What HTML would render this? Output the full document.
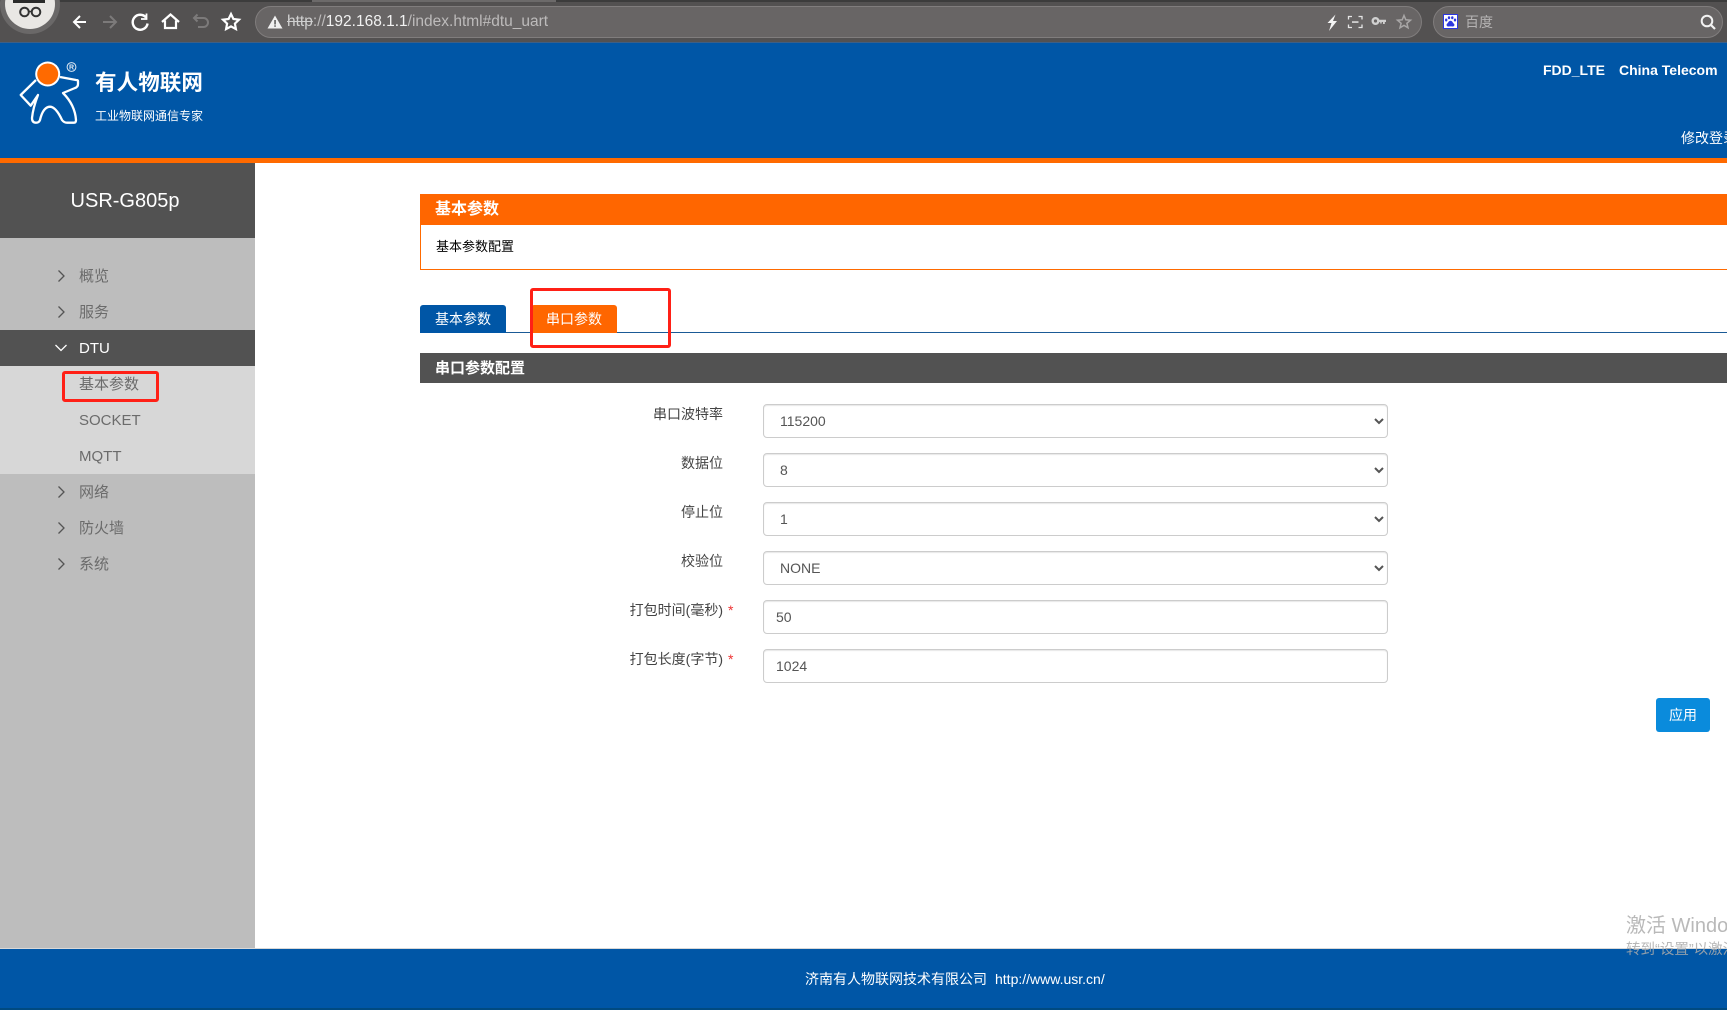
<!DOCTYPE html>
<html lang="zh">
<head>
<meta charset="utf-8">
<title>USR-G805p</title>
<style>
*{box-sizing:border-box}
html,body{margin:0;padding:0;width:1727px;height:1010px;overflow:hidden;background:#fff}
body{position:relative;font-family:"Liberation Sans","Noto Sans CJK SC",sans-serif;font-size:14px;color:#333}
.a{position:absolute}
.t{position:absolute;white-space:nowrap}
.nav{position:absolute;left:79px;font-size:15px;line-height:36px;height:36px;color:#6b6b6b;white-space:nowrap}
.chev{position:absolute;left:56px;width:10px;height:14px}
.lab{position:absolute;right:1004px;font-size:14px;line-height:20px;color:#444;white-space:nowrap;text-align:right}
.star{color:#e33;margin-left:5px;position:absolute;left:100%}
.fc{position:absolute;left:763px;width:625px;height:34px;border:1px solid #ccc;border-radius:4px;background:#fff;color:#555;font:14px "Liberation Sans","Noto Sans CJK SC",sans-serif;padding:0 12px;box-shadow:inset 0 1px 1px rgba(0,0,0,.1);outline:0}
.red{position:absolute;border:3px solid #ff2016;border-radius:3px}
</style>
</head>
<body>
<!-- browser chrome -->
<div class="a" style="left:0;top:0;width:1727px;height:43px;background:#535151"></div>
<div class="a" style="left:0;top:0;width:1727px;height:2px;background:#3c3c3c"></div>
<div class="a" style="left:312px;top:0;width:244px;height:2px;background:#6c6a6a"></div>
<div class="a" style="left:0;top:42px;width:1727px;height:1px;background:#3d5f86"></div>
<svg class="a" style="left:0;top:0" width="260" height="43" viewBox="0 0 260 43">
  <circle cx="30" cy="4" r="30" fill="#6a6868"/>
  <circle cx="30" cy="4" r="25" fill="#e9e7e4"/>
  <path d="M13 3H45V0H13z" fill="#2b2b2b"/>
  <circle cx="24.500" cy="12" r="4.300" fill="none" stroke="#333" stroke-width="2"/>
  <circle cx="36" cy="12" r="4.300" fill="none" stroke="#333" stroke-width="2"/>
  <path d="M28.800 11.500h3" stroke="#333" stroke-width="1.500"/>
  <g fill="none" stroke="#fff" stroke-width="2">
    <path d="M86 22H74M80 16l-6 6 6 6"/>
    <path d="M103 22h13M110 16l6 6-6 6" stroke="#7c7a7a"/>
    <path d="M146 17.500a7.500 7.500 0 1 0 1.600 6" stroke-width="2.400"/>
    <path d="M146.500 13.500v5.500h-5.500" stroke-width="1.800"/>
    <path d="M162 22l8.500-7.500 8.500 7.500M165 20.500V28h11v-7.500" stroke-width="2.200"/>
    <path d="M198 27h5.500a4.500 4.500 0 0 0 0-9H194M197.500 14.500l-3.500 3.500 3.500 3.500" stroke="#7c7a7a" stroke-width="2"/>
    <path d="M231 14l2.400 5 5.600.7-4.100 3.900 1 5.500-4.900-2.700-4.900 2.700 1-5.500-4.100-3.900 5.600-.7z" stroke-width="2.200"/>
  </g>
</svg>
<div class="a" style="left:255px;top:6px;width:1167px;height:32px;border:1px solid #807d7d;border-radius:16px;background:#686565"></div>
<div class="a" style="left:1433px;top:6px;width:290px;height:32px;border:1px solid #807d7d;border-radius:16px;background:#686565"></div>
<svg class="a" style="left:266px;top:13px" width="18" height="18" viewBox="0 0 18 18"><path d="M9 2.500L16.500 15.500H1.500z" fill="#f0f0f0"/><rect x="8.300" y="7" width="1.500" height="4.500" fill="#555"/><rect x="8.300" y="12.300" width="1.500" height="1.500" fill="#555"/></svg>
<div class="t" style="left:287px;top:12px;line-height:20px;font-size:15.500px;color:#bdbbbb"><span style="text-decoration:line-through;color:#cfcfcf">http</span>://<span style="color:#f2f2f2">192.168.1.1</span>/index.html#dtu_uart</div>
<svg class="a" style="left:1320px;top:10px" width="100" height="24" viewBox="0 0 100 24">
  <path d="M15.500 4.500L7.500 13h4l-2.500 8 8-10h-4z" fill="#f5f5f5"/>
  <path d="M28.500 9.500V6.500h3.500M38.500 6.500h3.500v3M42 14.500v3h-3.500M32 17.500h-3.500v-3" fill="none" stroke="#e5e5e5" stroke-width="1.300"/>
  <rect x="32" y="11.300" width="6.500" height="1.500" fill="#e5e5e5"/>
  <circle cx="55.500" cy="11" r="2.800" fill="none" stroke="#d0d0d0" stroke-width="2.400"/>
  <path d="M58.500 9.800H66v2.200h-1.200v2h-1.800v-2h-1.300v1.500h-1.500v-1.500h-2.200z" fill="#d0d0d0"/>
  <path d="M84 5.500l1.800 4.300 4.700.4-3.600 3.100 1.100 4.500-4-2.400-4 2.400 1.100-4.500-3.600-3.100 4.700-.4z" fill="none" stroke="#a8a6a6" stroke-width="1.500"/>
</svg>
<svg class="a" style="left:1443px;top:14px" width="15" height="15" viewBox="0 0 15 15">
  <rect x=".5" y=".5" width="14" height="14" fill="#fff" stroke="#2d38e0"/>
  <g fill="#2d38e0"><ellipse cx="3.200" cy="6" rx="1.200" ry="1.500"/><ellipse cx="6" cy="3.800" rx="1.200" ry="1.500"/><ellipse cx="9.300" cy="3.800" rx="1.200" ry="1.500"/><ellipse cx="12" cy="6" rx="1.200" ry="1.500"/><path d="M7.500 6.800c2 0 2 2 3.500 3 1 1.200.2 2.900-1.500 2.700-1.300-.2-2.700-.2-4 0-1.700.2-2.500-1.500-1.500-2.700 1.500-1 1.500-3 3.500-3z"/></g>
</svg>
<div class="t" style="left:1465px;top:11px;line-height:22px;font-size:14px;color:#b5b3b3">百度</div>
<svg class="a" style="left:1699px;top:13px" width="18" height="18" viewBox="0 0 18 18"><circle cx="8" cy="8" r="5.300" fill="none" stroke="#f2f2f2" stroke-width="2"/><path d="M12 12l4 4" stroke="#f2f2f2" stroke-width="2.200"/></svg>

<!-- header -->
<div class="a" style="left:0;top:43px;width:1727px;height:115px;background:#0056a6"></div>
<div class="a" style="left:0;top:158px;width:1727px;height:5px;background:#ff6a00"></div>
<svg class="a" style="left:0;top:43px" width="90" height="90" viewBox="0 43 90 90">
  <path d="M36 80L20.700 95 30.700 105.700 38 95Q33 108 32 118 32 122.700 36 122.700 39 122.700 40 120 43 107 50 106.700 56 107 62 120 64 122.700 67 122.700H74Q76 122.700 76 120 75 105 63 93L75 88Q78 87 78 84V81Q78 80 76 80L60 77" fill="none" stroke="#fff" stroke-width="2.300" stroke-linejoin="round"/>
  <circle cx="47.700" cy="74" r="12.500" fill="#fff"/>
  <circle cx="47.700" cy="74" r="10.500" fill="#ff6a00"/>
  <circle cx="71.500" cy="67" r="4.400" fill="none" stroke="#dfe9f3" stroke-width="1"/>
  <text x="71.500" y="69.700" font-size="7" font-weight="bold" fill="#dfe9f3" text-anchor="middle" font-family="Liberation Sans, sans-serif">R</text>
</svg>
<div class="t" style="left:95px;top:68px;font-size:21.500px;font-weight:bold;line-height:30px;color:#fff;letter-spacing:.1px">有人物联网</div>
<div class="t" style="left:95px;top:106px;font-size:12px;line-height:20px;color:#fff">工业物联网通信专家</div>
<div class="t" style="left:1543px;top:60px;font-size:14px;font-weight:bold;line-height:20px;color:#fff">FDD_LTE</div>
<div class="t" style="left:1619px;top:60px;font-size:14px;font-weight:bold;line-height:20px;color:#fff">China Telecom</div>
<div class="a" style="left:1681px;top:128px;width:46px;height:20px;overflow:hidden"><div class="t" style="left:0;top:0;font-size:14px;line-height:20px;color:#fff">修改登录</div></div>

<!-- sidebar -->
<div class="a" style="left:0;top:163px;width:255px;height:75px;background:#525252"></div>
<div class="t" style="left:0;top:185px;width:250px;text-align:center;font-size:20px;line-height:32px;color:#fff">USR-G805p</div>
<div class="a" style="left:0;top:238px;width:255px;height:711px;background:#bdbdbd"></div>
<div class="a" style="left:0;top:330px;width:255px;height:36px;background:#525252"></div>
<div class="a" style="left:0;top:366px;width:255px;height:108px;background:#d7d7d7"></div>

<svg class="chev" style="top:269px" viewBox="0 0 10 14"><path d="M2.500 1.500L8 7l-5.500 5.500" fill="none" stroke="#555" stroke-width="1.300"/></svg>
<div class="nav" style="top:259px">概览</div>
<svg class="chev" style="top:305px" viewBox="0 0 10 14"><path d="M2.500 1.500L8 7l-5.500 5.500" fill="none" stroke="#555" stroke-width="1.300"/></svg>
<div class="nav" style="top:295px">服务</div>
<svg class="a" style="left:54px;top:341px" width="14" height="14" viewBox="0 0 14 14"><path d="M1.500 4L7 9.500 12.500 4" fill="none" stroke="#fff" stroke-width="1.300"/></svg>
<div class="nav" style="top:331px;color:#fff">DTU</div>
<div class="nav" style="top:367px">基本参数</div>
<div class="nav" style="top:403px">SOCKET</div>
<div class="nav" style="top:439px">MQTT</div>
<svg class="chev" style="top:485px" viewBox="0 0 10 14"><path d="M2.500 1.500L8 7l-5.500 5.500" fill="none" stroke="#555" stroke-width="1.300"/></svg>
<div class="nav" style="top:475px">网络</div>
<svg class="chev" style="top:521px" viewBox="0 0 10 14"><path d="M2.500 1.500L8 7l-5.500 5.500" fill="none" stroke="#555" stroke-width="1.300"/></svg>
<div class="nav" style="top:511px">防火墙</div>
<svg class="chev" style="top:557px" viewBox="0 0 10 14"><path d="M2.500 1.500L8 7l-5.500 5.500" fill="none" stroke="#555" stroke-width="1.300"/></svg>
<div class="nav" style="top:547px">系统</div>
<div class="red" style="left:62px;top:371px;width:97px;height:31px"></div>

<!-- main -->
<div class="a" style="left:420px;top:194px;width:1307px;height:76px;border:1px solid #ff6a00;border-right:0;background:#fff"></div>
<div class="a" style="left:420px;top:194px;width:1307px;height:31px;background:#ff6600"></div>
<div class="t" style="left:435px;top:198px;font-size:16px;font-weight:bold;line-height:24px;color:#fff">基本参数</div>
<div class="t" style="left:436px;top:237px;font-size:13px;line-height:20px;color:#000">基本参数配置</div>

<div class="a" style="left:420px;top:332px;width:1307px;height:1px;background:#1a5a96"></div>
<div class="a" style="left:420px;top:305px;width:86px;height:28px;background:#0056a6;border-radius:3px 3px 0 0"></div>
<div class="t" style="left:435px;top:308px;font-size:14px;line-height:22px;color:#fff">基本参数</div>
<div class="a" style="left:531px;top:305px;width:86px;height:28px;background:#ff6600;border-radius:3px 3px 0 0"></div>
<div class="t" style="left:546px;top:308px;font-size:14px;line-height:22px;color:#fff">串口参数</div>
<div class="red" style="left:530px;top:288px;width:141px;height:60px"></div>

<div class="a" style="left:420px;top:353px;width:1307px;height:30px;background:#525252"></div>
<div class="t" style="left:435px;top:357px;font-size:15px;font-weight:bold;line-height:24px;color:#fff">串口参数配置</div>

<div class="lab" style="top:404px">串口波特率</div>
<select class="fc" style="top:404px"><option>115200</option></select>
<div class="lab" style="top:453px">数据位</div>
<select class="fc" style="top:453px"><option>8</option></select>
<div class="lab" style="top:502px">停止位</div>
<select class="fc" style="top:502px"><option>1</option></select>
<div class="lab" style="top:551px">校验位</div>
<select class="fc" style="top:551px"><option>NONE</option></select>
<div class="lab" style="top:600px">打包时间(毫秒)<span class="star">*</span></div>
<input class="fc" style="top:600px" value="50">
<div class="lab" style="top:649px">打包长度(字节)<span class="star">*</span></div>
<input class="fc" style="top:649px" value="1024">

<div class="a" style="left:1656px;top:698px;width:54px;height:34px;background:#0a8bdc;border-radius:3px;color:#fff;font-size:14px;line-height:34px;text-align:center">应用</div>

<!-- footer -->
<div class="a" style="left:0;top:948px;width:1727px;height:2px;background:#d8d8d8"></div>
<div class="a" style="left:0;top:949px;width:1727px;height:59px;background:#0056a6"></div>
<div class="a" style="left:0;top:1008px;width:1727px;height:2px;background:#004a80"></div>
<div class="t" style="left:805px;top:969px;font-size:14px;line-height:20px;color:#fff">济南有人物联网技术有限公司</div>
<div class="t" style="left:995px;top:969px;font-size:14px;line-height:20px;color:#fff">http://www.usr.cn/</div>

<!-- watermark -->
<div class="a" style="left:1626px;top:912px;width:101px;height:48px;overflow:hidden">
  <div class="t" style="left:0;top:0;font-size:20px;line-height:28px;color:#b9b9b9">激活 Windows</div>
  <div class="t" style="left:0;top:28px;font-size:14.500px;line-height:20px;color:rgba(170,170,170,.85)">转到“设置”以激活 Windows。</div>
</div>
</body>
</html>
